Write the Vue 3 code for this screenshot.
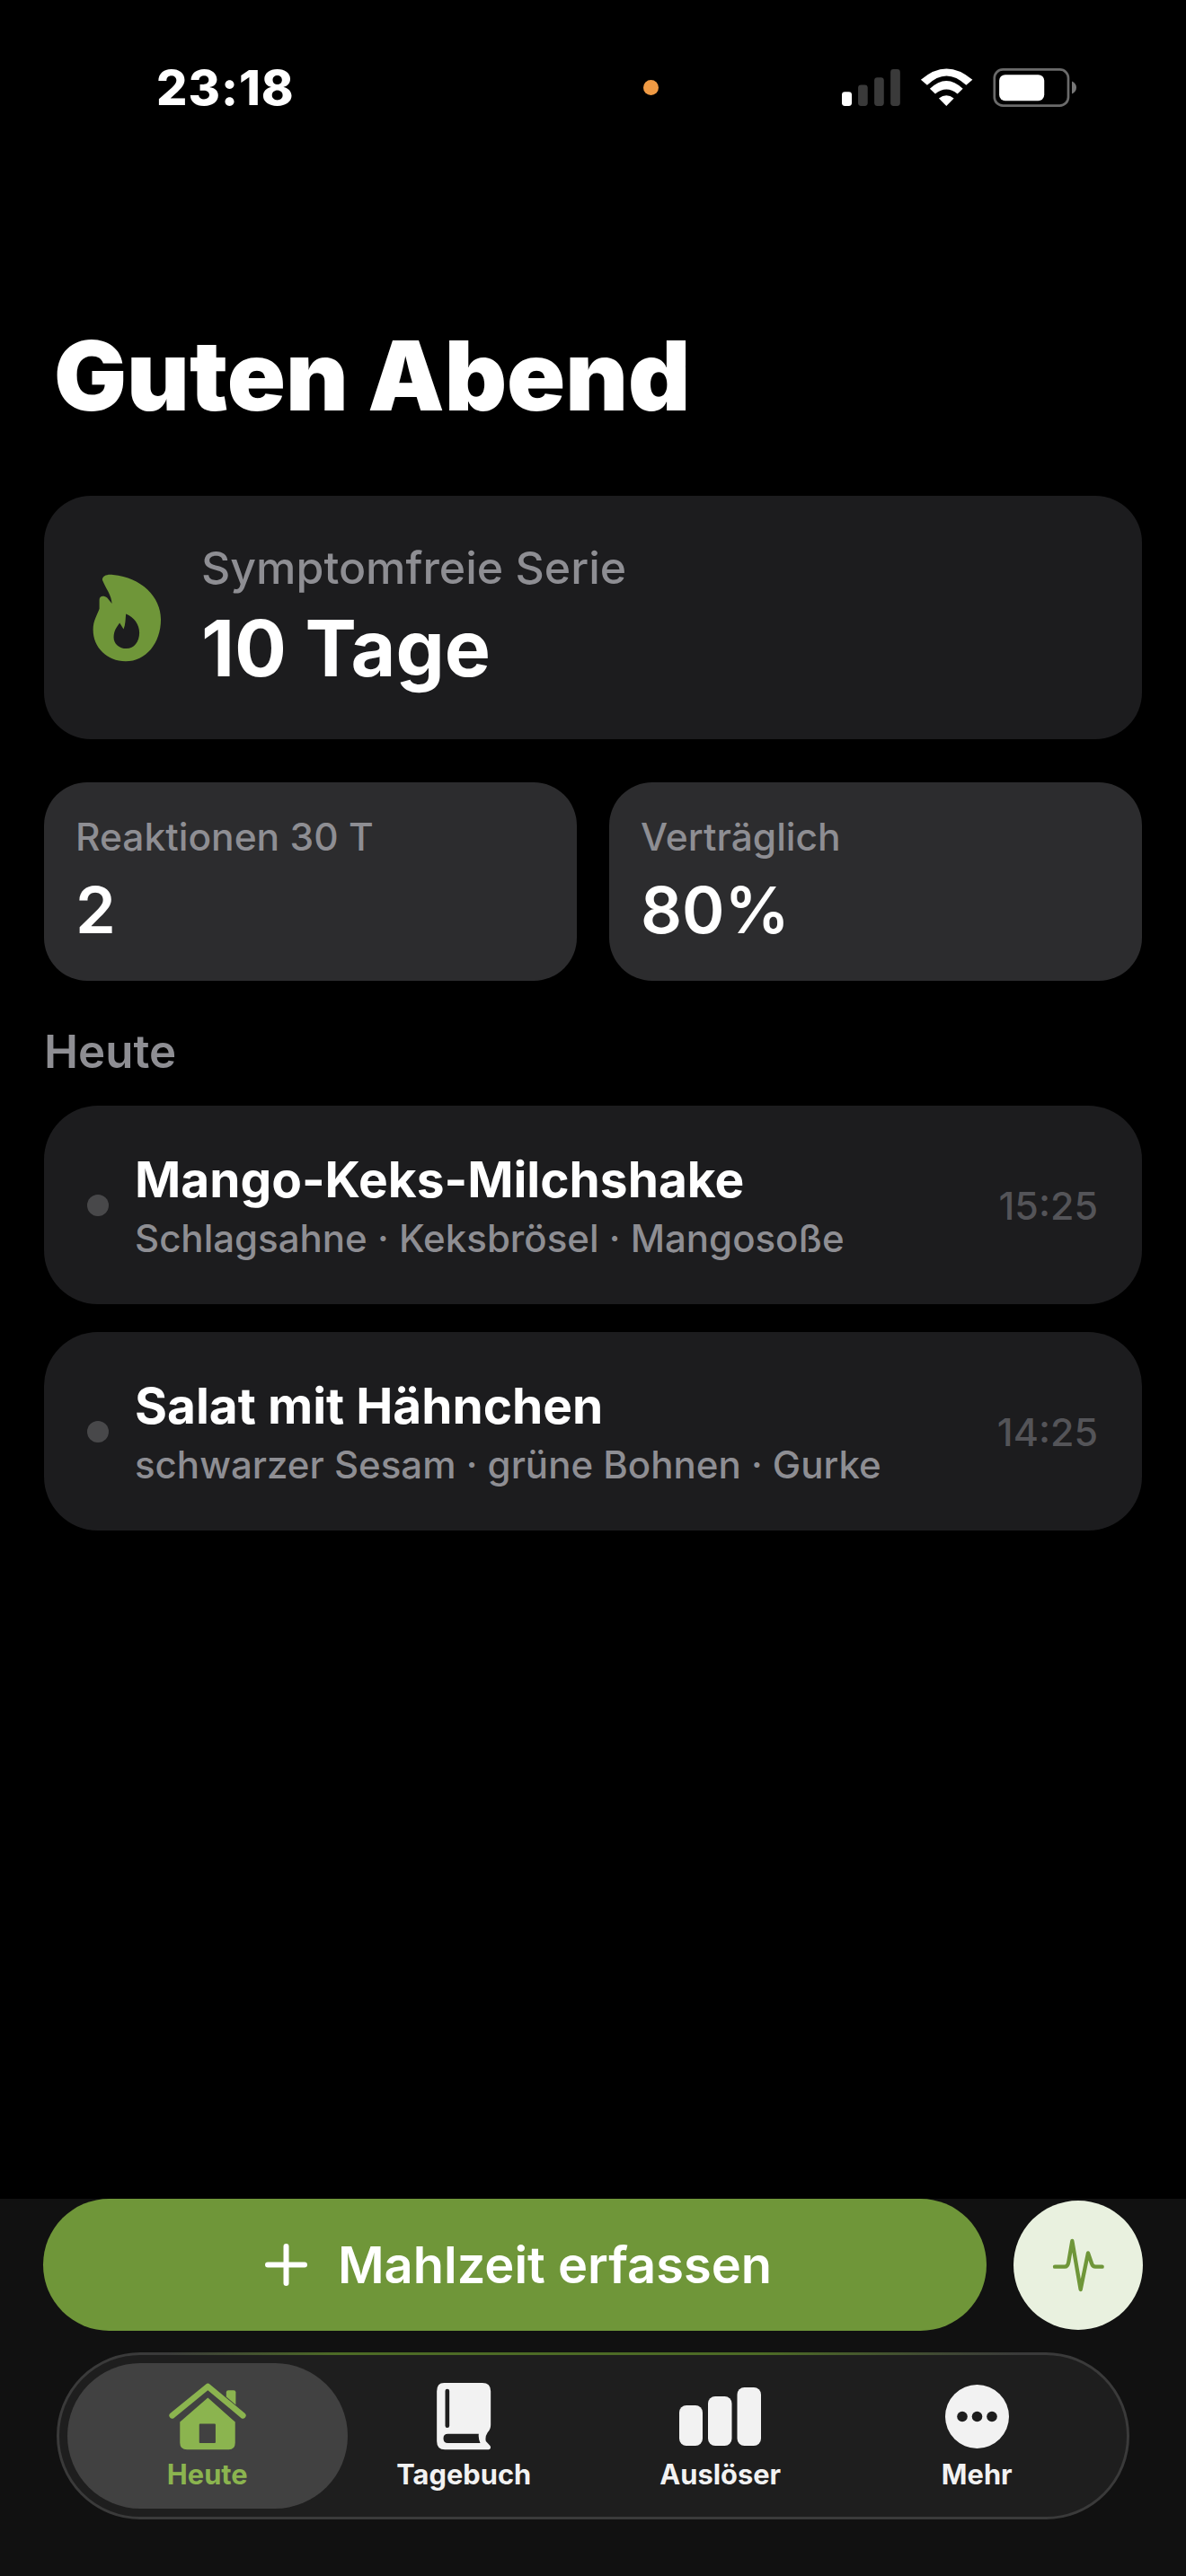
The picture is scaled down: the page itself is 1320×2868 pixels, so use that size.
<template>
  <div class="screen">
    <!-- Status bar -->
    <div class="status-bar">
      <span class="clock">23:18</span>
      <span class="mic-dot"></span>
      <svg class="status-icons" viewBox="172 75 781 128">
        <rect x="172" y="153" width="33" height="47" rx="10" fill="#fff" />
        <rect x="226" y="130" width="32" height="70" rx="10" fill="#3a3a3a" />
        <rect x="280" y="105" width="32" height="95" rx="10" fill="#3a3a3a" />
        <rect x="334" y="78" width="32" height="122" rx="10" fill="#3a3a3a" />
        <path d="M435 113 Q520 39 607 113 L586 131 Q520 69 456 131 Z" fill="#fff" />
        <path d="M465 143 Q520 90 575 143 L557 160 Q520 130 483 160 Z" fill="#fff" />
        <path d="M495 175 Q520 155 545 175 L520 200 Z" fill="#fff" />
        <rect x="680" y="79" width="246" height="120" rx="28" fill="none" stroke="#6a6a6a" stroke-width="8" />
        <rect x="696" y="96" width="150" height="87" rx="20" fill="#fff" />
        <path d="M938 118 Q953 125 953 139 Q953 153 938 160 Z" fill="#777" />
      </svg>
    </div>

    <main class="content">
      <h1 class="greeting">Guten Abend</h1>

      <!-- Streak -->
      <section class="streak-card">
        <svg class="flame" viewBox="102 88 230 295">
          <path
            fill-rule="evenodd"
            fill="#6f9639"
            d="M134 108 C134 94 150 88 170 91 C265 100 330 165 330 240 C330 320 280 381 212 381 C150 381 103 335 103 275 C103 245 117 225 124 205 L124 175 C124 160 140 160 150 168 L166 187 C165 160 145 135 134 108 Z M213 222 C240 232 258 258 258 285 C258 315 240 338 215 338 C190 338 172 322 172 300 C172 280 182 265 192 252 L205 273 C212 258 211 240 213 222 Z"
          />
        </svg>
        <div>
          <div class="streak-label">Symptomfreie Serie</div>
          <div class="streak-value">10 Tage</div>
        </div>
      </section>

      <!-- Stats -->
      <section class="stats">
        <div v-for="stat in stats" :key="stat.label" class="stat-card">
          <div class="stat-label">{{ stat.label }}</div>
          <div class="stat-value">{{ stat.value }}</div>
        </div>
      </section>

      <h2 class="section-title">Heute</h2>

      <div class="meal-list">
        <div v-for="meal in meals" :key="meal.name" class="meal-row">
          <span class="meal-dot"></span>
          <div class="meal-info">
            <div class="meal-name">{{ meal.name }}</div>
            <div class="meal-tags">{{ meal.tags }}</div>
          </div>
          <span class="meal-time">{{ meal.time }}</span>
        </div>
      </div>
    </main>

    <!-- Bottom bar -->
    <footer class="bottom">
      <div class="actions">
        <button class="add-btn" type="button">
          <svg class="plus" viewBox="0 0 47 47">
            <path d="M23.5 3 V44 M3 23.5 H44" stroke="#fff" stroke-width="6" stroke-linecap="round" fill="none" />
          </svg>
          Mahlzeit erfassen
        </button>
        <button class="pulse-btn" type="button">
          <svg class="pulse" viewBox="0 6 240 240">
            <path
              d="M42 131 H75 Q85 131 88 115 L100 45 L128 207 L153 85 L165 120 Q168 131 178 131 H200"
              fill="none"
              stroke="#6f9639"
              stroke-width="13"
              stroke-linecap="round"
              stroke-linejoin="round"
            />
          </svg>
        </button>
      </div>

      <nav class="tabbar">
        <div v-for="tab in tabs" :key="tab.id" class="tab" :class="{ active: tab.id === 'heute' }">
          <div class="tab-icon">
            <svg v-if="tab.id === 'heute'" class="icon-home" viewBox="40 38 258 227">
              <path d="M50 148 L170 50 L288 148" fill="none" stroke="#8bb44f" stroke-width="20" stroke-linecap="round" stroke-linejoin="round" />
              <path d="M232 70 Q232 63 239 63 H257 Q264 63 264 70 V112 L232 85 Z" fill="#8bb44f" />
              <path
                fill-rule="evenodd"
                fill="#8bb44f"
                d="M170 88 L262 170 V240 Q262 263 240 263 H100 Q76 263 76 240 V170 Z M144 176 Q141 176 141 179 V238 Q141 241 144 241 H193 Q196 241 196 238 V179 Q196 176 193 176 Z"
              />
            </svg>
            <svg v-else-if="tab.id === 'tagebuch'" class="icon-book" viewBox="48 40 182 225">
              <path
                fill="#f2f2f2"
                d="M72 40 H200 Q228 40 228 68 V180 Q228 195 218 205 Q208 220 212 235 L226 250 Q232 263 216 263 H75 Q48 263 48 235 V68 Q48 40 72 40 Z"
              />
              <rect x="76" y="60" width="14" height="130" rx="7" fill="#1e1e1e" />
              <path fill="#1e1e1e" d="M85 210 H188 Q186 225 193 241 H85 Q70 241 70 225 Q70 210 85 210 Z" />
            </svg>
            <svg v-else-if="tab.id === 'ausloeser'" class="icon-bars" viewBox="0 0 91 65">
              <rect x="0" y="20" width="26" height="45" rx="8" fill="#f2f2f2" />
              <rect x="32" y="10" width="26.500" height="55" rx="8" fill="#f2f2f2" />
              <rect x="64.500" y="0" width="26.500" height="65" rx="8" fill="#f2f2f2" />
            </svg>
            <svg v-else class="icon-more" viewBox="0 0 71 71">
              <circle cx="35.500" cy="35.500" r="35.500" fill="#f2f2f2" />
              <circle cx="19" cy="35.500" r="5.800" fill="#1e1e1e" />
              <circle cx="35.500" cy="35.500" r="5.800" fill="#1e1e1e" />
              <circle cx="52" cy="35.500" r="5.800" fill="#1e1e1e" />
            </svg>
          </div>
          <span class="tab-label">{{ tab.label }}</span>
        </div>
      </nav>
    </footer>
  </div>
</template>

<script setup>
const stats = [
  { label: 'Reaktionen 30 T', value: '2' },
  { label: 'Verträglich', value: '80%' }
]

const meals = [
  { name: 'Mango-Keks-Milchshake', tags: 'Schlagsahne · Keksbrösel · Mangosoße', time: '15:25' },
  { name: 'Salat mit Hähnchen', tags: 'schwarzer Sesam · grüne Bohnen · Gurke', time: '14:25' }
]

const tabs = [
  { id: 'heute', label: 'Heute' },
  { id: 'tagebuch', label: 'Tagebuch' },
  { id: 'ausloeser', label: 'Auslöser' },
  { id: 'mehr', label: 'Mehr' }
]
</script>

<style scoped>
.screen {
  width: 1320px;
  height: 2868px;
  display: flex;
  flex-direction: column;
  background: #000;
  color: #fff;
  font-family: Inter, "Liberation Sans", sans-serif;
  overflow: hidden;
}

.status-bar {
  height: 195px;
  display: flex;
  align-items: center;
  padding-left: 174px;
  flex-shrink: 0;
}

.clock {
  width: 151px;
  font-size: 54px;
  font-weight: 800;
  letter-spacing: 1px;
  white-space: nowrap;
}

.mic-dot {
  width: 17px;
  height: 17px;
  margin-left: 391px;
  border-radius: 50%;
  background: #f09a44;
}

.status-icons {
  width: 261px;
  height: 43px;
  margin-left: 204px;
}

.content {
  flex: 1;
  padding: 163px 49px 0;
}

.greeting {
  margin: 0 0 74px 11px;
  font-size: 107.500px;
  line-height: 120px;
  font-weight: 900;
}

.streak-card {
  height: 271px;
  display: flex;
  align-items: center;
  gap: 44px;
  padding-left: 54px;
  background: #1c1c1e;
  border-radius: 52px;
}

.flame {
  width: 77px;
  height: 98px;
  flex-shrink: 0;
}

.streak-label {
  font-size: 50px;
  line-height: 60px;
  font-weight: 500;
  color: #8e8e93;
  transform: translateY(-1px);
}

.streak-value {
  margin-top: 9px;
  font-size: 86px;
  line-height: 100px;
  font-weight: 700;
}

.stats {
  display: grid;
  grid-template-columns: 1fr 1fr;
  gap: 36px;
  margin-top: 48px;
}

.stat-card {
  height: 221px;
  padding: 36px 35px 0;
  box-sizing: border-box;
  background: #2c2c2e;
  border-radius: 48px;
}

.stat-label {
  font-size: 42.500px;
  line-height: 50px;
  font-weight: 500;
  color: #8e8e93;
}

.stat-value {
  margin-top: 16px;
  font-size: 72px;
  line-height: 80px;
  font-weight: 600;
}

.section-title {
  margin: 49px 0 30px 0;
  font-size: 51px;
  line-height: 60px;
  font-weight: 600;
  color: #8e8e93;
}

.meal-list {
  display: flex;
  flex-direction: column;
  gap: 31px;
}

.meal-row {
  height: 221px;
  display: flex;
  align-items: center;
  gap: 29px;
  padding: 0 49px 0 48px;
  background: #1c1c1e;
  border-radius: 60px;
}

.meal-dot {
  width: 24px;
  height: 24px;
  border-radius: 50%;
  background: #48484a;
  flex-shrink: 0;
}

.meal-info {
  flex: 1;
}

.meal-name {
  font-size: 55px;
  line-height: 66px;
  font-weight: 700;
}

.meal-tags {
  margin-top: 8px;
  font-size: 42px;
  line-height: 50px;
  font-weight: 500;
  color: #8e8e93;
}

.meal-time {
  font-size: 43px;
  font-weight: 500;
  color: #545458;
}

.bottom {
  height: 420px;
  flex-shrink: 0;
  padding: 0 48px;
  box-sizing: border-box;
  background: #111;
}

.actions {
  display: flex;
  align-items: center;
  gap: 30px;
}

.add-btn {
  width: 1050px;
  height: 147px;
  display: flex;
  align-items: center;
  justify-content: center;
  gap: 34px;
  padding: 0 0 0 8px;
  border: 0;
  border-radius: 74px;
  background: #6f9639;
  color: #fff;
  font-family: inherit;
  font-size: 56px;
  font-weight: 600;
}

.plus {
  width: 47px;
  height: 47px;
}

.pulse-btn {
  width: 144px;
  height: 144px;
  display: flex;
  align-items: center;
  justify-content: center;
  padding: 0;
  border: 0;
  border-radius: 50%;
  background: #e9f1df;
}

.pulse {
  width: 80px;
  height: 80px;
}

.tabbar {
  position: relative;
  height: 186px;
  box-sizing: border-box;
  margin: 24px 15px 0;
  padding: 9px 0 9px 22px;
  display: grid;
  grid-template-columns: repeat(4, 285.5px);
  background: #1e1e1e;
  border: 3px solid #3a3a3a;
  border-radius: 93px;
}

.tabbar::before {
  content: "";
  position: absolute;
  top: -3px;
  left: 10%;
  right: 10%;
  height: 3px;
  background: linear-gradient(90deg, transparent, #4d6b26 20%, #4d6b26 70%, transparent);
}

.tab {
  display: flex;
  flex-direction: column;
  align-items: center;
  padding-top: 22px;
  border-radius: 81px;
}

.tab.active {
  margin: 0 -13px;
  background: #414141;
}

.tab-icon {
  height: 75px;
  display: flex;
  align-items: center;
  justify-content: center;
}

.icon-home {
  width: 86px;
  height: 75px;
}

.icon-book {
  width: 61px;
  height: 75px;
}

.icon-bars {
  width: 91px;
  height: 65px;
}

.icon-more {
  width: 71px;
  height: 71px;
}

.tab-label {
  margin-top: 9px;
  font-size: 30.800px;
  line-height: 36px;
  font-weight: 700;
  color: #f2f2f2;
}

.tab.active .tab-label {
  color: #8bb44f;
}
</style>
